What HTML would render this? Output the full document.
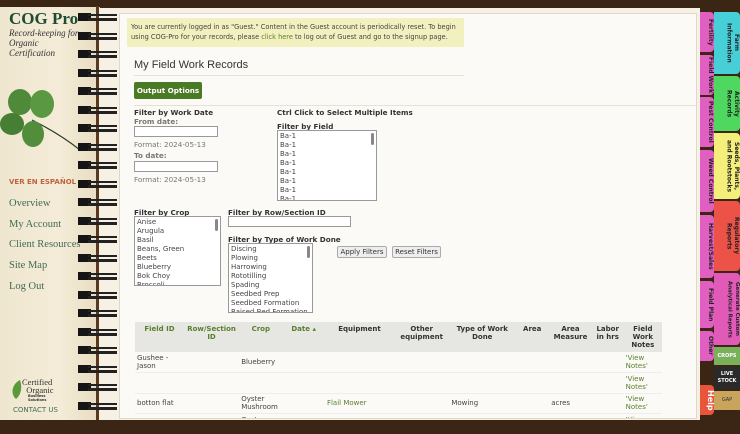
<!DOCTYPE html>
<html><head><meta charset="utf-8"><style>
*{box-sizing:border-box;margin:0;padding:0}
body{width:740px;height:434px;overflow:hidden;background:#3b2616;font-family:"DejaVu Sans",Verdana,sans-serif;position:relative}
.lp{position:absolute;left:0;top:7px;width:100px;height:413px;background:linear-gradient(90deg,#efe6cf,#f4ecd8 60%,#e8dcc0);}
.rp{position:absolute;left:98px;top:8px;width:602px;height:412px;background:#f6f1e4;}
.panel{position:absolute;left:119px;top:13px;width:578px;height:406px;background:#fbfaf6;border:1px solid #ddd8c8;overflow:hidden}
.spine{position:absolute;left:96px;top:6px;width:3px;height:414px;background:#5a3a1c}
.ring{position:absolute;left:78px;width:40px;height:8px}
.ring i{position:absolute;left:0;top:0;width:13px;height:8px;background:#151515}
.ring b{position:absolute;left:10px;top:1px;width:29px;height:2px;background:#222}
.ring u{position:absolute;left:10px;top:5px;width:29px;height:3px;background:#222}
.ser{font-family:"Liberation Serif",serif}
.nav{position:absolute;left:9px;font-family:"Liberation Serif",serif;font-size:10.5px;color:#3f6b55}
.abs{position:absolute}
.s{font-size:7.2px;color:#333}
.b{font-weight:bold}
input.t{position:absolute;height:11px;border:1px solid #999;background:#fff}
.sel{position:absolute;border:1px solid #999;background:#fff;font-size:7px;color:#444;line-height:9px;padding:1px 2px;overflow:hidden}
.sel .sb{position:absolute;right:2px;top:2px;width:3px;height:12px;background:#888;border-radius:2px}
.btn{position:absolute;height:12px;border:1px solid #aaa;background:#eee;font-size:7px;color:#333;text-align:center;line-height:10px;border-radius:2px}
table{position:absolute;left:15px;top:308px;width:527px;border-collapse:collapse;font-size:7px;color:#444}
th{background:#e6e6e3;color:#333;font-weight:bold;height:30px;vertical-align:top;padding-top:3px;line-height:8px}
th.g{color:#5a7f2e}
td{height:20.5px;border-bottom:1px solid #eee;vertical-align:middle;line-height:8px;padding:0 2px}
.gr{color:#5a7f2e}
.tab{position:absolute;writing-mode:vertical-rl;font-size:6px;font-weight:bold;color:#222;text-align:center;border-radius:0 4px 4px 0;line-height:7.5px;white-space:nowrap}
</style></head><body>
<div class="lp"></div>
<div class="rp"></div>
<div class="panel">
 <div class="abs" style="left:7px;top:4px;width:337px;height:29px;background:#f3f0c0;font-size:6.6px;color:#444;padding:5px 4px;line-height:9.5px;white-space:nowrap">You are currently logged in as "Guest." Content in the Guest account is periodically reset. To begin<br>using COG-Pro for your records, please <span class="gr">click here</span> to log out of Guest and go to the signup page.</div>
 <div class="abs" style="left:14px;top:45px;font-family:'Liberation Sans',sans-serif;font-size:11px;color:#333">My Field Work Records</div>
 <div class="abs" style="left:14px;top:61px;width:330px;height:1px;background:#e5e2d8"></div>
 <div class="abs b" style="left:14px;top:68px;width:68px;height:17px;background:#4b7a25;border-radius:2px;color:#fff;font-size:7.2px;line-height:17px;text-align:center">Output Options</div>
 <div class="abs" style="left:14px;top:91px;width:564px;height:1px;background:#e5e2d8"></div>
 <div class="abs s b" style="left:14px;top:94px">Filter by Work Date</div>
 <div class="abs s b" style="left:14px;top:103px;color:#777">From date:</div>
 <input class="t" style="left:14px;top:112px;width:84px">
 <div class="abs s" style="left:14px;top:126px;color:#777">Format: 2024-05-13</div>
 <div class="abs s b" style="left:14px;top:137px;color:#777">To date:</div>
 <input class="t" style="left:14px;top:147px;width:84px">
 <div class="abs s" style="left:14px;top:161px;color:#777">Format: 2024-05-13</div>
 <div class="abs s b" style="left:157px;top:94px">Ctrl Click to Select Multiple Items</div>
 <div class="abs s b" style="left:157px;top:108px">Filter by Field</div>
 <div class="sel" style="left:157px;top:116px;width:100px;height:71px"><div class="sb"></div>Ba-1<br>Ba-1<br>Ba-1<br>Ba-1<br>Ba-1<br>Ba-1<br>Ba-1<br>Ba-1</div>
 <div class="abs s b" style="left:14px;top:194px">Filter by Crop</div>
 <div class="sel" style="left:14px;top:202px;width:87px;height:70px"><div class="sb"></div>Anise<br>Arugula<br>Basil<br>Beans, Green<br>Beets<br>Blueberry<br>Bok Choy<br>Broccoli</div>
 <div class="abs s b" style="left:108px;top:194px">Filter by Row/Section ID</div>
 <input class="t" style="left:108px;top:202px;width:123px">
 <div class="abs s b" style="left:108px;top:221px">Filter by Type of Work Done</div>
 <div class="sel" style="left:108px;top:229px;width:85px;height:70px"><div class="sb"></div>Discing<br>Plowing<br>Harrowing<br>Rototilling<br>Spading<br>Seedbed Prep<br>Seedbed Formation<br>Raised Bed Formation</div>
 <div class="btn" style="left:217px;top:232px;width:50px">Apply Filters</div>
 <div class="btn" style="left:272px;top:232px;width:49px">Reset Filters</div>
 <table>
 <tr><th class="g" style="width:46px">Field ID</th><th class="g" style="width:52px">Row/Section<br>ID</th><th class="g" style="width:40px">Crop</th><th class="g" style="width:40px">Date ▴</th><th style="width:65px">Equipment</th><th style="width:52px">Other<br>equipment</th><th style="width:62px">Type of Work<br>Done</th><th style="width:32px">Area</th><th style="width:40px">Area<br>Measure</th><th style="width:30px">Labor<br>in hrs</th><th style="width:36px">Field<br>Work<br>Notes</th></tr>
 <tr><td>Gushee -<br>Jason</td><td></td><td>Blueberry</td><td></td><td></td><td></td><td></td><td></td><td></td><td></td><td class="gr">'View<br>Notes'</td></tr>
 <tr><td></td><td></td><td></td><td></td><td></td><td></td><td></td><td></td><td></td><td></td><td class="gr">'View<br>Notes'</td></tr>
 <tr><td>botton flat</td><td></td><td>Oyster<br>Mushroom</td><td></td><td class="gr">Flail Mower</td><td></td><td>Mowing</td><td></td><td>acres</td><td></td><td class="gr">'View<br>Notes'</td></tr>
 <tr><td>botton flat</td><td></td><td>Oyster<br>Mushroom</td><td></td><td class="gr">Flail Mower</td><td></td><td>Mowing</td><td></td><td>acres</td><td></td><td class="gr">'View<br>Notes'</td></tr>
 </table>
</div>
<!-- left page -->
<div class="abs ser b" style="left:9px;top:9px;font-size:17px;color:#1f4a33">COG Pro</div>
<div class="abs ser" style="left:9px;top:28px;font-size:9px;font-style:italic;color:#333;line-height:10px">Record-keeping for<br>Organic<br>Certification</div>
<svg class="abs" style="left:0;top:82px" width="90" height="80" viewBox="0 0 90 80">
 <path d="M80 68 Q60 52 32 38" stroke="#2e3a22" stroke-width="1.2" fill="none"/>
 <ellipse cx="20" cy="20" rx="12" ry="13" fill="#4e8a3a"/>
 <ellipse cx="42" cy="22" rx="12" ry="14" fill="#5a9842"/>
 <ellipse cx="12" cy="42" rx="12" ry="11" fill="#467f33"/>
 <ellipse cx="33" cy="52" rx="11" ry="13" fill="#528d3b"/>
</svg>
<div class="abs b" style="left:9px;top:178px;font-size:7px;color:#c0633f">VER EN ESPAÑOL</div>
<div class="nav" style="top:198px">Overview</div>
<div class="nav" style="top:219px">My Account</div>
<div class="nav" style="top:239px">Client Resources</div>
<div class="nav" style="top:260px">Site Map</div>
<div class="nav" style="top:281px">Log Out</div>
<svg class="abs" style="left:10px;top:380px" width="14" height="20"><path d="M10 0 C2 4 0 14 6 19 C12 14 12 6 10 0Z" fill="#5a9a3a"/></svg>
<div class="abs ser" style="left:22px;top:378px;font-size:8.5px;color:#333;line-height:8px">Certified<br>&nbsp;&nbsp;Organic</div>
<div class="abs" style="left:28px;top:394px;font-size:3.5px;color:#333;font-weight:bold;line-height:4px">Business<br>Solutions</div>
<div class="abs" style="left:13px;top:406px;font-size:7px;color:#3f6b55">CONTACT US</div>
<div class="spine"></div>
<div id="rings"></div>
<!-- tabs -->
<div class="tab" style="left:700px;top:12px;width:14px;height:40px;background:#e05fc0">Fertility</div>
<div class="tab" style="left:700px;top:55px;width:14px;height:40px;background:#e05fc0">Field Work</div>
<div class="tab" style="left:700px;top:97px;width:14px;height:50px;background:#e05fc0">Pest Control</div>
<div class="tab" style="left:700px;top:150px;width:14px;height:62px;background:#e05fc0">Weed Control</div>
<div class="tab" style="left:700px;top:215px;width:14px;height:63px;background:#e05fc0">Harvest/Sales</div>
<div class="tab" style="left:700px;top:281px;width:14px;height:47px;background:#e05fc0">Field Plan</div>
<div class="tab" style="left:700px;top:331px;width:14px;height:30px;background:#e05fc0">Other</div>
<div class="tab" style="left:714px;top:12px;width:26px;height:62px;background:#47cfd8">Farm<br>Information</div>
<div class="tab" style="left:714px;top:76px;width:26px;height:55px;background:#4fd860">Activity<br>Records</div>
<div class="tab" style="left:714px;top:133px;width:26px;height:66px;background:#f4ee7a">Seeds, Plants,<br>and Rootstocks</div>
<div class="tab" style="left:714px;top:201px;width:26px;height:70px;background:#ec5248">Regulatory<br>Reports</div>
<div class="tab" style="left:714px;top:273px;width:26px;height:72px;background:#e25ab8;font-size:5.5px">Generate Custom<br>Analytical Reports</div>
<div class="abs" style="left:714px;top:347px;width:26px;height:18px;background:#7bb05a;font-size:5px;color:#fff;text-align:center;line-height:18px;font-weight:bold">CROPS</div>
<div class="abs" style="left:714px;top:367px;width:26px;height:22px;background:#2a2a2a;font-size:5px;color:#fff;text-align:center;line-height:7px;font-weight:bold;padding-top:4px">LIVE<br>STOCK</div>
<div class="abs" style="left:714px;top:391px;width:26px;height:19px;background:#c9a45c;font-size:5px;color:#333;text-align:center;line-height:19px">GAP</div>
<div class="tab" style="left:700px;top:385px;width:14px;height:30px;background:#e8553a;color:#fff;font-size:8px">Help</div>
<script>
var h='';for(var i=0;i<22;i++){h+='<div class="ring" style="top:'+(13+i*18.5)+'px"><i></i><b></b><u></u></div>'}document.getElementById('rings').innerHTML=h;
</script>
</body></html>
